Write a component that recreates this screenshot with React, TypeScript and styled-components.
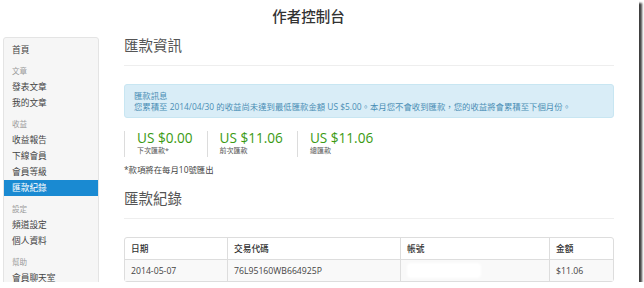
import React from "react";
import styled, { createGlobalStyle } from "styled-components";

const Global = createGlobalStyle`
  html, body { margin: 0; padding: 0; background: #fff; }
  body { font-family: "Open Sans", "Noto Sans CJK TC", sans-serif; color: #333; }
  * { box-sizing: border-box; }
`;

const Frame = styled.div`
  width: 639px;
  height: 282px;
  overflow: hidden;
  background: #fff;
  box-shadow: 3px 3px 2px rgba(0, 0, 0, 0.75);
  display: flex;
  flex-direction: column;
`;

const Header = styled.header`
  height: 37px;
  flex: none;
  display: flex;
  justify-content: center;
  padding: 6px 22px 0 0;
`;

const Title = styled.h1`
  margin: 0;
  font-size: 14.5px;
  line-height: 20px;
  font-weight: 500;
  color: #333;
  font-family: "Noto Sans CJK TC", sans-serif;
`;

const Body = styled.div`
  display: flex;
  gap: 25px;
  padding-left: 3px;
  flex: 1;
  min-height: 0;
`;

const Sidebar = styled.nav`
  width: 96px;
  flex: none;
  height: 260px;
  background: #f6f6f6;
  border: 1px solid #e4e4e4;
  border-radius: 3px;
  padding-top: 4px;
  display: flex;
  flex-direction: column;
`;

const NavItem = styled.div<{ $active?: boolean }>`
  height: 16.1px;
  line-height: 16.1px;
  padding-left: 8px;
  font-size: 8.7px;
  font-family: "Noto Sans CJK TC", sans-serif;
  color: ${(p) => (p.$active ? "#fff" : "#444")};
  background: ${(p) => (p.$active ? "#1a8ad2" : "transparent")};
  white-space: nowrap;
`;

const NavHeader = styled.div`
  height: 16.1px;
  line-height: 16.1px;
  margin-top: 4.7px;
  padding-left: 8px;
  font-size: 7.5px;
  font-family: "Noto Sans CJK TC", sans-serif;
  color: #9a9a9a;
`;

const Main = styled.main`
  width: 490px;
  flex: none;
  display: flex;
  flex-direction: column;
`;

const SectionTitle = styled.h2<{ $mt?: number }>`
  margin: ${(p) => p.$mt ?? 0}px 0 0;
  font-size: 14.5px;
  line-height: 16px;
  font-weight: 400;
  color: #555;
  font-family: "Noto Sans CJK TC", sans-serif;
`;

const Rule = styled.div`
  margin-top: 12px;
  height: 1px;
  background: #eeeeee;
`;

const Alert = styled.div`
  margin-top: 18px;
  height: 34px;
  background: #d9edf7;
  border: 1px solid #c8e6f2;
  border-radius: 3px;
  padding: 5px 9px;
  color: #4a8db5;
  font-size: 8.4px;
  line-height: 11px;
  white-space: nowrap;
`;

const Stats = styled.div`
  margin-top: 13px;
  display: flex;
`;

const Stat = styled.div`
  height: 26px;
  border-left: 1px solid #dcdcdc;
  padding: 0 14px 0 12px;
  display: flex;
  flex-direction: column;
`;

const Amount = styled.div`
  font-family: "Open Sans", sans-serif;
  font-size: 13.6px;
  line-height: 14px;
  color: #3a9a12;
`;

const StatLabel = styled.div`
  font-size: 7px;
  line-height: 12px;
  color: #555;
`;

const Note = styled.div`
  margin-top: 7px;
  font-size: 8.4px;
  line-height: 12px;
  color: #444;
`;

const Table = styled.table`
  margin-top: 18px;
  width: 490px;
  border: 1px solid #dddddd;
  border-radius: 3px;
  border-collapse: separate;
  border-spacing: 0;
  table-layout: fixed;
  font-size: 8.7px;
  color: #444;
`;

const Th = styled.th<{ $w: number }>`
  width: ${(p) => p.$w}px;
  height: 21px;
  padding: 0 0 0 6px;
  text-align: left;
  font-weight: 500;
  color: #333;
  font-family: "Noto Sans CJK TC", sans-serif;
  & + & { border-left: 1px solid #dddddd; }
`;

const Td = styled.td`
  height: 22px;
  padding: 0 0 0 6px;
  background: #f9f9f9;
  border-top: 1px solid #dddddd;
  & + & { border-left: 1px solid #dddddd; }
`;

const Redacted = styled.span`
  display: inline-block;
  width: 74px;
  height: 15px;
  background: #fff;
  border-radius: 4px;
  filter: blur(1px);
  vertical-align: middle;
`;

const nav: Array<{ h?: string; t?: string; active?: boolean }> = [
  { t: "首頁" },
  { h: "文章" },
  { t: "發表文章" },
  { t: "我的文章" },
  { h: "收益" },
  { t: "收益報告" },
  { t: "下線會員" },
  { t: "會員等級" },
  { t: "匯款紀錄", active: true },
  { h: "設定" },
  { t: "頻道設定" },
  { t: "個人資料" },
  { h: "幫助" },
  { t: "會員聊天室" },
];

export default function App() {
  return (
    <>
      <Global />
      <Frame>
        <Header>
          <Title>作者控制台</Title>
        </Header>
        <Body>
          <Sidebar>
            {nav.map((n, i) =>
              n.h ? (
                <NavHeader key={i}>{n.h}</NavHeader>
              ) : (
                <NavItem key={i} $active={n.active}>
                  {n.t}
                </NavItem>
              )
            )}
          </Sidebar>
          <Main>
            <SectionTitle>匯款資訊</SectionTitle>
            <Rule />
            <Alert>
              <div>匯款訊息</div>
              <div>
                您累積至 2014/04/30 的收益尚未達到最低匯款金額 US $5.00。本月您不會收到匯款，您的收益將會累積至下個月份。
              </div>
            </Alert>
            <Stats>
              <Stat>
                <Amount>US $0.00</Amount>
                <StatLabel>下次匯款*</StatLabel>
              </Stat>
              <Stat>
                <Amount>US $11.06</Amount>
                <StatLabel>前次匯款</StatLabel>
              </Stat>
              <Stat>
                <Amount>US $11.06</Amount>
                <StatLabel>總匯款</StatLabel>
              </Stat>
            </Stats>
            <Note>*款項將在每月10號匯出</Note>
            <SectionTitle $mt={14}>匯款紀錄</SectionTitle>
            <Rule />
            <Table>
              <thead>
                <tr>
                  <Th $w={102}>日期</Th>
                  <Th $w={173}>交易代碼</Th>
                  <Th $w={149}>帳號</Th>
                  <Th $w={64}>金額</Th>
                </tr>
              </thead>
              <tbody>
                <tr>
                  <Td>2014-05-07</Td>
                  <Td>76L95160WB664925P</Td>
                  <Td>
                    <Redacted />
                  </Td>
                  <Td>$11.06</Td>
                </tr>
              </tbody>
            </Table>
          </Main>
        </Body>
      </Frame>
    </>
  );
}
